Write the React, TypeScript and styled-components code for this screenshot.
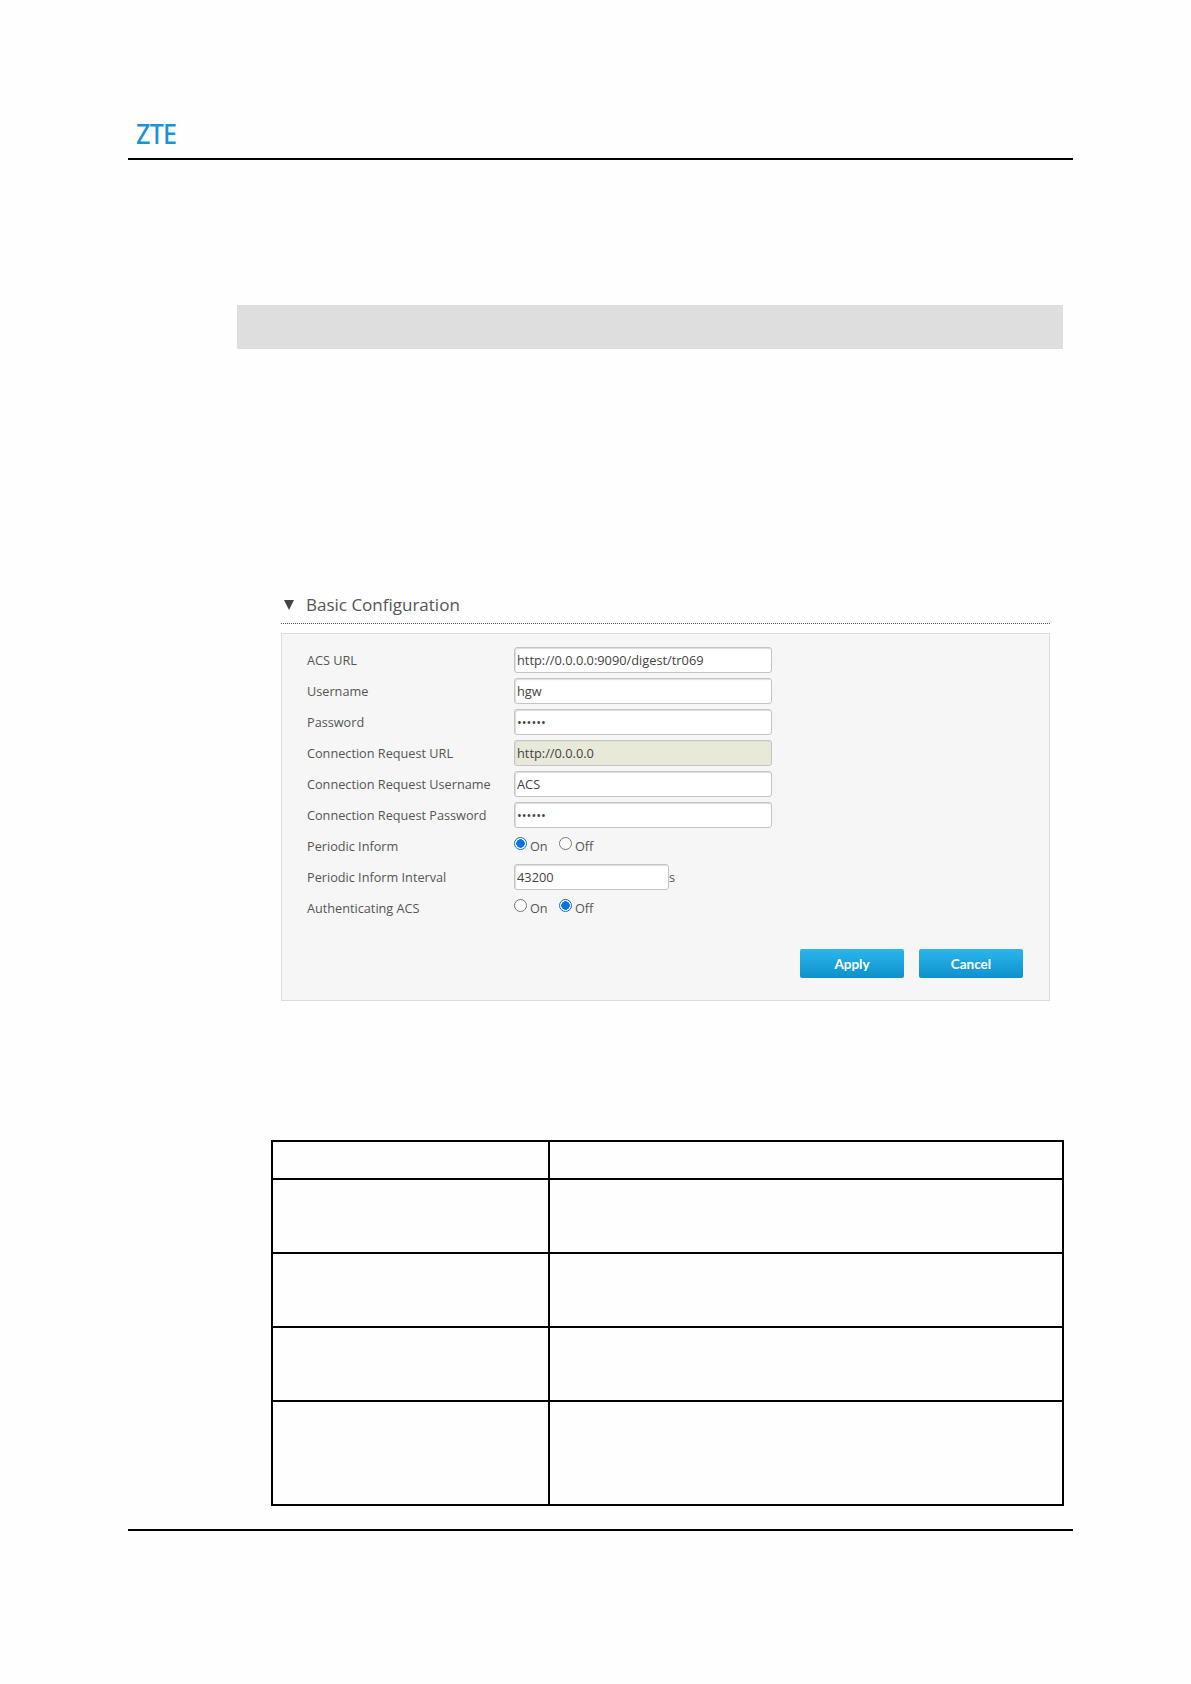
import { createGlobalStyle, styled } from "styled-components";

const GlobalStyle = createGlobalStyle`
  html, body {
    margin: 0;
    padding: 0;
    background-color: #fefefe;
  }
`;
const Page = styled.div`
  width: 1191px;
  height: 1684px;
  box-sizing: border-box;
  padding: 118px 118px 0 128px;
  font-family: "Open Sans", sans-serif;
  overflow: hidden;
`;
const Header = styled.div`
  height: 40px;
  border-bottom: 2px solid #000;
  padding-left: 8px;
`;
const Logo = styled.div`
  width: 40px;
  font-family: "Noto Sans", sans-serif;
  font-size: 27px;
  font-weight: 500;
  line-height: 32px;
  letter-spacing: -0.8px;
  color: #1b92d1;
  transform: scaleX(0.93);
  transform-origin: left;
`;
const Band = styled.div`
  height: 44px;
  margin: 145px 10px 0 109px;
  background-color: #dedede;
`;
const Section = styled.div`
  margin: 242px 23px 0 153px;
`;
const SectionTitle = styled.div`
  height: 33px;
  box-sizing: border-box;
  display: flex;
  align-items: center;
  gap: 12px;
  padding: 0 0 6px 3px;
  border-bottom: 1px dotted #555;
  font-size: 17px;
  color: #555;
`;
const Triangle = styled.span`
  width: 0;
  height: 0;
  margin-top: 1px;
  border-left: 5.5px solid transparent;
  border-right: 5.5px solid transparent;
  border-top: 10px solid #444;
`;
const Panel = styled.div`
  height: 368px;
  margin-top: 9px;
  box-sizing: border-box;
  border: 1px solid #dcdcdc;
  background-color: #f6f6f6;
  padding: 10px 0 0 25px;
  position: relative;
`;
const FormRow = styled.div`
  height: 31px;
  display: flex;
  align-items: center;
  font-size: 12.7px;
  color: #555;
`;
const RowLabel = styled.div`
  width: 207px;
  flex-shrink: 0;
`;
const TextField = styled.input<{ $short?: boolean; $locked?: boolean }>`
  width: ${(p) => (p.$short ? "155px" : "258px")};
  height: 26px;
  box-sizing: border-box;
  padding: 0 2px;
  border: 1px solid #c4c4c4;
  border-radius: 3px;
  box-shadow: inset 1px 1px 1px #ddd;
  background-color: ${(p) => (p.$locked ? "#e9e9da" : "#fff")};
  font-family: "Open Sans", sans-serif;
  font-size: 12.8px;
  color: #444;
  outline: none;
`;
const Unit = styled.span`
  margin-left: 0;
`;
const RadioGroup = styled.div`
  display: flex;
  align-items: center;
`;
const RadioOption = styled.label`
  width: 45px;
  display: flex;
  align-items: center;
  gap: 3px;
`;
const RadioDot = styled.span<{ $on?: boolean }>`
  width: 13px;
  height: 13px;
  margin-top: -4px;
  box-sizing: border-box;
  border-radius: 50%;
  border: 1px solid ${(p) => (p.$on ? "#0a6fdc" : "#777")};
  background: ${(p) => (p.$on ? "radial-gradient(circle, #0a74e4 0 4px, #fff 4.5px)" : "#fff")};
`;
const Actions = styled.div`
  position: absolute;
  right: 26px;
  bottom: 22px;
  display: flex;
  gap: 15px;
`;
const ActionButton = styled.button`
  width: 104px;
  height: 29px;
  padding: 0;
  border: 0;
  border-radius: 2px;
  background: linear-gradient(#2bb6ec, #0f90cb);
  font-family: Lato, sans-serif;
  font-size: 13.5px;
  font-weight: 700;
  color: #fff;
`;
const ParamTable = styled.table`
  width: 793px;
  margin: 139px 0 0 143px;
  border-collapse: collapse;
  table-layout: fixed;
  td {
    border: 2px solid #000;
    padding: 0;
  }
  td:first-child {
    width: 275px;
  }
`;
const ParamRow = styled.tr<{ $h: number }>`
  height: ${(p) => p.$h}px;
`;
const Footer = styled.div`
  margin-top: 23px;
  border-top: 2px solid #000;
`;

const fields = [
  { label: "ACS URL", value: "http://0.0.0.0:9090/digest/tr069" },
  { label: "Username", value: "hgw" },
  { label: "Password", value: "secret", type: "password" },
  { label: "Connection Request URL", value: "http://0.0.0.0", locked: true },
  { label: "Connection Request Username", value: "ACS" },
  { label: "Connection Request Password", value: "secret", type: "password" },
];

const OnOff = ({ on }: { on: boolean }) => (
  <RadioGroup>
    <RadioOption>
      <RadioDot $on={on} />
      On
    </RadioOption>
    <RadioOption>
      <RadioDot $on={!on} />
      Off
    </RadioOption>
  </RadioGroup>
);

const App = () => {
  return (
    <Page>
      <GlobalStyle />
      <Header>
        <Logo>ZTE</Logo>
      </Header>
      <Band />
      <Section>
        <SectionTitle>
          <Triangle />
          Basic Configuration
        </SectionTitle>
        <Panel>
          {fields.map((f) => (
            <FormRow key={f.label}>
              <RowLabel>{f.label}</RowLabel>
              <TextField readOnly type={f.type ?? "text"} value={f.value} $locked={f.locked} />
            </FormRow>
          ))}
          <FormRow>
            <RowLabel>Periodic Inform</RowLabel>
            <OnOff on />
          </FormRow>
          <FormRow>
            <RowLabel>Periodic Inform Interval</RowLabel>
            <TextField readOnly value="43200" $short />
            <Unit>s</Unit>
          </FormRow>
          <FormRow>
            <RowLabel>Authenticating ACS</RowLabel>
            <OnOff on={false} />
          </FormRow>
          <Actions>
            <ActionButton>Apply</ActionButton>
            <ActionButton>Cancel</ActionButton>
          </Actions>
        </Panel>
      </Section>
      <ParamTable>
        <tbody>
          {[38, 74, 74, 74, 104].map((h, i) => (
            <ParamRow key={i} $h={h}>
              <td />
              <td />
            </ParamRow>
          ))}
        </tbody>
      </ParamTable>
      <Footer />
    </Page>
  );
};

export default App;
